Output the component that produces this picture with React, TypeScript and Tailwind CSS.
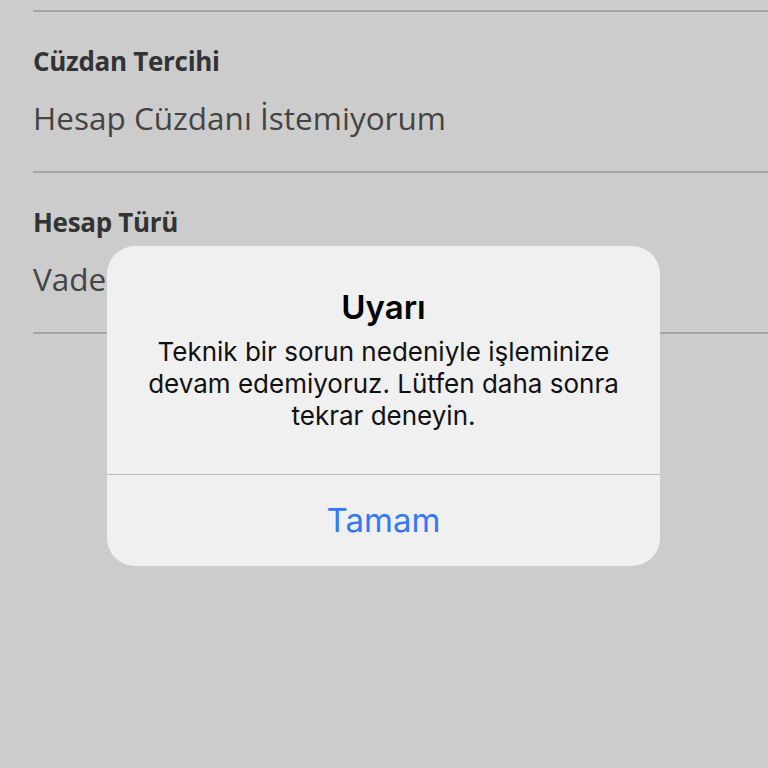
const rows = [
  { label: "Cüzdan Tercihi", value: "Hesap Cüzdanı İstemiyorum" },
  { label: "Hesap Türü", value: "Vadesiz Hesap" },
];

function Row({ label, value }: { label: string; value: string }) {
  return (
    <div className="flex h-[161px] flex-col border-b-2 border-[#a6a6a6] pt-[33px]">
      <div className="text-[26px] font-bold leading-[32px] tracking-[-0.3px] text-[#333]">{label}</div>
      <div className="mt-[21px] text-[31.5px] leading-[40px] text-[#444]">{value}</div>
    </div>
  );
}

export default function App() {
  return (
    <div
      className="relative h-[768px] w-[768px] overflow-hidden bg-[#cccccc]"
      style={{ fontFamily: "'Open Sans', 'Noto Sans', sans-serif" }}
    >
      <div className="ml-[33px] mt-[10px] border-t-2 border-[#a6a6a6]">
        {rows.map((r) => (
          <Row key={r.label} label={r.label} value={r.value} />
        ))}
      </div>

      <div
        className="absolute left-[107px] top-[246px] flex h-[320px] w-[553px] flex-col overflow-hidden rounded-[28px] bg-[#f0f0f0]"
        style={{ fontFamily: "Inter, 'Liberation Sans', sans-serif" }}
      >
        <div className="flex h-[228px] flex-col items-center px-4 pt-[42px] text-center">
          <div className="text-[33px] font-semibold leading-[38px] text-black">Uyarı</div>
          <div className="mt-[10px] text-[26px] leading-[32px] text-[#111]">
            Teknik bir sorun nedeniyle işleminize
            <br />
            devam edemiyoruz. Lütfen daha sonra
            <br />
            tekrar deneyin.
          </div>
        </div>
        <div className="h-px bg-[#bdbdbd]" />
        <div className="flex flex-1 items-center justify-center text-[33px] text-[#3478f6]">
          Tamam
        </div>
      </div>
    </div>
  );
}
